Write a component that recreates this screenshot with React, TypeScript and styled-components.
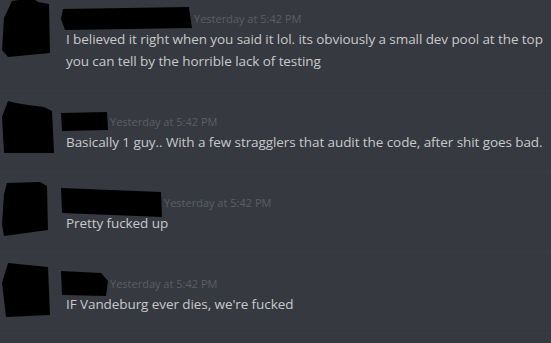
import { FC } from "react";
import styled, { createGlobalStyle } from "styled-components";

interface Message {
  nameWidth: number;
  nameHeight: number;
  nameShape: string;
  avatarShape: string;
  lines: string[];
}

const messages: Message[] = [
  {
    nameWidth: 131,
    nameHeight: 23,
    nameShape: "2,2 128,0 131,21 4,23 0,12",
    avatarShape: "10,3 30,0 36,4 47,6 48,55 6,59 0,52 2,20",
    lines: [
      "I believed it right when you said it lol. its obviously a small dev pool at the top",
      "you can tell by the horrible lack of testing",
    ],
  },
  {
    nameWidth: 47,
    nameHeight: 19,
    nameShape: "0,1 46,0 47,18 1,19",
    avatarShape: "6,0 14,2 26,4 42,6 50,10 52,52 2,52 0,16",
    lines: ["Basically 1 guy.. With a few stragglers that audit the code, after shit goes bad."],
  },
  {
    nameWidth: 101,
    nameHeight: 29,
    nameShape: "0,0 100,4 101,29 1,25",
    avatarShape: "5,1 38,0 45,4 46,48 2,54 0,42 2,12",
    lines: ["Pretty fucked up"],
  },
  {
    nameWidth: 47,
    nameHeight: 25,
    nameShape: "0,0 40,2 47,10 45,25 1,24",
    avatarShape: "6,0 46,4 48,52 4,54 0,20",
    lines: ["IF Vandeburg ever dies, we're fucked"],
  },
];

export default function App() {
  return (
    <>
      <GlobalStyle />
      <Chat>
        {messages.map((m, idx) => (
          <MessageGroup key={idx} $first={idx === 0} message={m} />
        ))}
      </Chat>
    </>
  );
}

const MessageGroup: FC<{ message: Message; $first: boolean }> = ({ message, $first }) => (
  <Group $first={$first}>
    <AvatarCol>
      <svg width="54" height="60" viewBox="0 0 54 60">
        <polygon points={message.avatarShape} fill="#000" />
      </svg>
    </AvatarCol>
    <Body>
      <Header>
        <svg width={message.nameWidth} height={message.nameHeight} viewBox={`0 0 ${message.nameWidth} ${message.nameHeight}`}>
          <polygon points={message.nameShape} fill="#000" />
        </svg>
        <Timestamp>Yesterday at 5:42 PM</Timestamp>
      </Header>
      {message.lines.map((line, i) => (
        <Line key={i}>{line}</Line>
      ))}
    </Body>
  </Group>
);

const GlobalStyle = createGlobalStyle`
  html, body {
    margin: 0;
    background: #36393f;
    overflow: hidden;
  }
`;

const Chat = styled.div`
  width: 551px;
  height: 343px;
  background: #36393f;
  font-family: "Open Sans", Lato, sans-serif;
  overflow: hidden;
`;

const Group = styled.div<{ $first: boolean }>`
  display: flex;
  align-items: flex-start;
  padding: ${(p) => (p.$first ? "8px" : "20px")} 0 18px;
  border-bottom: 1px solid rgba(255, 255, 255, 0.02);
`;

const AvatarCol = styled.div`
  width: 66px;
  height: 40px;
  flex-shrink: 0;
  margin-top: -10px;
  padding-left: 2px;
  box-sizing: border-box;
  svg {
    display: block;
    overflow: visible;
  }
`;

const Body = styled.div`
  flex: 1;
  min-width: 0;
`;

const Header = styled.div`
  display: flex;
  align-items: center;
  height: 20px;
  margin-left: -5px;
  svg {
    display: block;
    flex-shrink: 0;
  }
`;

const Timestamp = styled.span`
  margin-left: 2px;
  font-size: 11px;
  color: #5b5e65;
  white-space: nowrap;
`;

const Line = styled.div`
  font-size: 13.5px;
  line-height: 22px;
  letter-spacing: -0.08px;
  color: #c8c9cb;
  white-space: nowrap;
`;
